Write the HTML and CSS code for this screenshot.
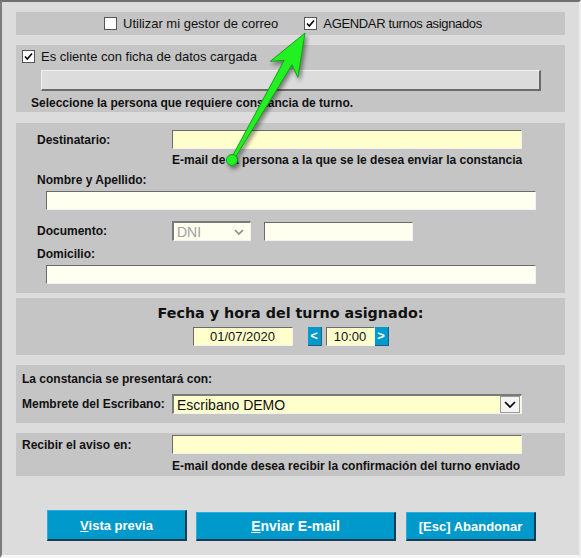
FILE: index.html
```html
<!DOCTYPE html>
<html lang="es">
<head>
  <meta charset="UTF-8" />
  <meta name="viewport" content="width=device-width, initial-scale=1.0" />
  <title>Constancia de turno</title>
  <link rel="stylesheet" href="styles.css">
</head>
<body>
  <div class="window">

    <!-- Opciones de envio -->
    <div class="panel panel-opts">
      <label class="chk"><span class="box"></span>Utilizar mi gestor de correo</label>
      <label class="chk chk-agendar"><span class="box"><svg viewBox="0 0 11 11"><polyline points="2,5.5 4.3,8 9,2.5" /></svg></span>AGENDAR turnos asignados</label>
    </div>

    <!-- Cliente -->
    <div class="panel panel-client">
      <label class="chk"><span class="box"><svg viewBox="0 0 11 11"><polyline points="2,5.5 4.3,8 9,2.5" /></svg></span>Es cliente con ficha de datos cargada</label>
      <div class="picker"></div>
      <p class="note">Seleccione la persona que requiere constancia de turno.</p>
    </div>

    <!-- Destinatario -->
    <div class="panel panel-dest">
      <div class="row">
        <span class="lbl">Destinatario:</span>
        <span class="field yellow w-dest"></span>
      </div>
      <p class="hint">E-mail de la persona a la que se le desea enviar la constancia</p>
      <span class="lbl block">Nombre y Apellido:</span>
      <span class="field ivory wide"></span>
      <div class="row row-doc">
        <span class="lbl">Documento:</span>
        <span class="select dni">DNI<svg viewBox="0 0 10 6"><polyline points="1,1 5,5 9,1" /></svg></span>
        <span class="field ivory doc"></span>
      </div>
      <span class="lbl block">Domicilio:</span>
      <span class="field ivory wide"></span>
    </div>

    <!-- Fecha y hora -->
    <div class="panel panel-date">
      <h2>Fecha y hora del turno asignado:</h2>
      <div class="date-row">
        <span class="field yellow date">01/07/2020</span>
        <span class="step">&lt;</span>
        <span class="field yellow time">10:00</span>
        <span class="step">&gt;</span>
      </div>
    </div>

    <!-- Membrete -->
    <div class="panel panel-letter">
      <span class="lbl block">La constancia se presentará con:</span>
      <div class="row row-letter">
        <span class="lbl">Membrete del Escribano:</span>
        <span class="select escribano">Escribano DEMO<span class="drop"><svg viewBox="0 0 12 7"><polyline points="1,1 6,6 11,1" /></svg></span></span>
      </div>
    </div>

    <!-- Aviso -->
    <div class="panel panel-notice">
      <div class="row">
        <span class="lbl">Recibir el aviso en:</span>
        <span class="field yellow w-dest"></span>
      </div>
      <p class="hint">E-mail donde desea recibir la confirmación del turno enviado</p>
    </div>

    <div class="actions">
      <button class="btn btn-preview"><u>V</u>ista previa</button>
      <button class="btn btn-send"><u>E</u>nviar E-mail</button>
      <button class="btn btn-esc">[Esc] Abandonar</button>
    </div>

    <!-- Flecha de ayuda -->
    <svg class="pointer" viewBox="0 0 581 558">
      <polygon points="230.7,159.3 284.2,60.3 270.2,61.4 305,33 297.9,77.4 292,64.7 233.3,160.7" />
      <circle cx="232" cy="160" r="5.5" />
    </svg>
  </div>
</body>
</html>
```

FILE: styles.css
```css
* { box-sizing: border-box; }
body { margin: 0; background: #dcdcdc; font-family: "Liberation Sans", Arial, sans-serif; color: #111; }

.window {
  position: relative; width: 581px; height: 558px; background: #dcdcdc;
  border-top: 2px solid #6f6f6f; border-left: 2px solid #7c7c7c;
  border-right: 2px solid #ececec; border-bottom: 3px solid #f6f6f6;
  padding: 10px 14px 0;
}
.panel { background: #c5c5c5; }

/* checkboxes */
.chk { display: flex; align-items: center; gap: 6px; font-size: 13px; line-height: 13px; }
.box { width: 13px; height: 13px; background: #fff; border: 1px solid #555; display: flex; }
.box svg { width: 11px; height: 11px; fill: none; stroke: #000; stroke-width: 1.6; }

.panel-opts { height: 23px; display: flex; align-items: center; gap: 26px; padding-left: 88px; }
.chk-agendar { letter-spacing: -0.35px; }

.panel-client { margin-top: 10px; padding: 5px 0 2px 6px; }
.picker {
  width: 500px; height: 21px; margin: 7px 0 0 19px; background: #dcdcdc;
  border-top: 1px solid #f2f2f2; border-left: 1px solid #f2f2f2;
  border-right: 2px solid #6a6a6a; border-bottom: 2px solid #6a6a6a;
}
.note { margin: 5px 0 0 9px; font-size: 12px; line-height: 14px; font-weight: bold; }

/* labels and fields */
.lbl { font-weight: bold; font-size: 12px; line-height: 14px; }
.lbl.block { display: block; }
.row { display: flex; align-items: center; }
.field {
  display: block; height: 19px; font-size: 13px; line-height: 17px; text-align: center;
  border-top: 1px solid #6a6a6a; border-left: 1px solid #6a6a6a;
  border-right: 1px solid #f2f2f2; border-bottom: 1px solid #f2f2f2;
}
.yellow { background: #ffffcc; }
.ivory { background: #fffff0; }
.hint { margin: 5px 0 0 150px; font-size: 12px; line-height: 14px; font-weight: bold; }

.panel-dest { margin-top: 11px; padding: 7px 0 9px 21px; }
.panel-dest .row .lbl { width: 135px; }
.panel-dest .hint { margin: 4px 0 0 135px; }
.panel-dest .lbl.block { margin-top: 6px; }
.panel-dest .wide { width: 490px; margin: 4px 0 0 9px; }
.w-dest { width: 350px; }
.row-doc { margin-top: 11px; }
.select {
  display: flex; align-items: center; height: 20px; font-size: 14px;
  border-top: 2px solid #7a7a7a; border-left: 2px solid #7a7a7a;
  border-right: 1px solid #f2f2f2; border-bottom: 1px solid #f2f2f2;
}
.dni { width: 79px; background: #fffff0; color: #a0a0a0; padding-left: 3px; justify-content: space-between; padding-right: 6px; }
.dni svg { width: 10px; height: 6px; fill: none; stroke: #8a8a8a; stroke-width: 1.6; }
.doc { width: 149px; margin-left: 13px; align-self: flex-end; }

/* fecha */
.panel-date { margin-top: 5px; padding: 6px 0 9px; text-align: center; }
.panel-date h2 { margin: 0; font-family: "DejaVu Sans", Verdana, sans-serif; font-size: 14.3px; line-height: 18px; font-weight: bold; color: #111; }
.date-row { display: flex; justify-content: center; margin-top: 5px; }
.date { width: 100px; margin-right: 15px; }
.time { width: 49px; margin-left: 4px; }
.step {
  width: 14px; height: 19px; background: #0099cc; color: #fff; font-weight: bold; font-size: 13px;
  line-height: 18px; text-align: center; border-bottom: 1px solid #1d5f84; border-right: 1px solid #1d5f84;
}

/* membrete */
.panel-letter { margin-top: 10px; padding: 7px 0 9px 6px; }
.row-letter { margin-top: 8px; }
.row-letter .lbl { width: 150px; }
.escribano { width: 350px; background: #ffffcc; padding-left: 3px; position: relative; }
.drop {
  position: absolute; right: 1px; top: 0; width: 20px; height: 17px; background: #f4f4f4;
  border: 1px solid #9a9a9a; display: flex; align-items: center; justify-content: center;
}
.drop svg { width: 12px; height: 7px; fill: none; stroke: #000; stroke-width: 1.7; }

/* aviso */
.panel-notice { margin-top: 10px; padding: 2px 0 3px 6px; }
.panel-notice .row .lbl { width: 150px; }

/* botones */
.actions { display: flex; align-items: flex-end; margin-top: 34px; padding-left: 31px; }
.btn {
  background: #0099cc; color: #fff; font-family: "Liberation Sans", Arial, sans-serif; font-weight: bold;
  font-size: 13px; border: none; border-right: 2px solid #1e3a52; border-bottom: 2px solid #1e3a52;
  border-top: 1px solid #2aaee0; border-left: 1px solid #2aaee0; padding: 0; cursor: pointer;
}
.btn-preview { width: 140px; height: 31px; margin-right: 9px; }
.btn-send { width: 200px; height: 29px; margin-right: 10px; font-size: 14px; }
.btn-esc { width: 130px; height: 29px; }

.pointer {
  position: absolute; left: -2px; top: -2px; width: 581px; height: 558px; pointer-events: none;
  filter: drop-shadow(2px 3px 2px rgba(0,0,0,0.45));
}
.pointer polygon, .pointer circle { fill: #22f022; stroke: #13a313; stroke-width: 1; }
```
